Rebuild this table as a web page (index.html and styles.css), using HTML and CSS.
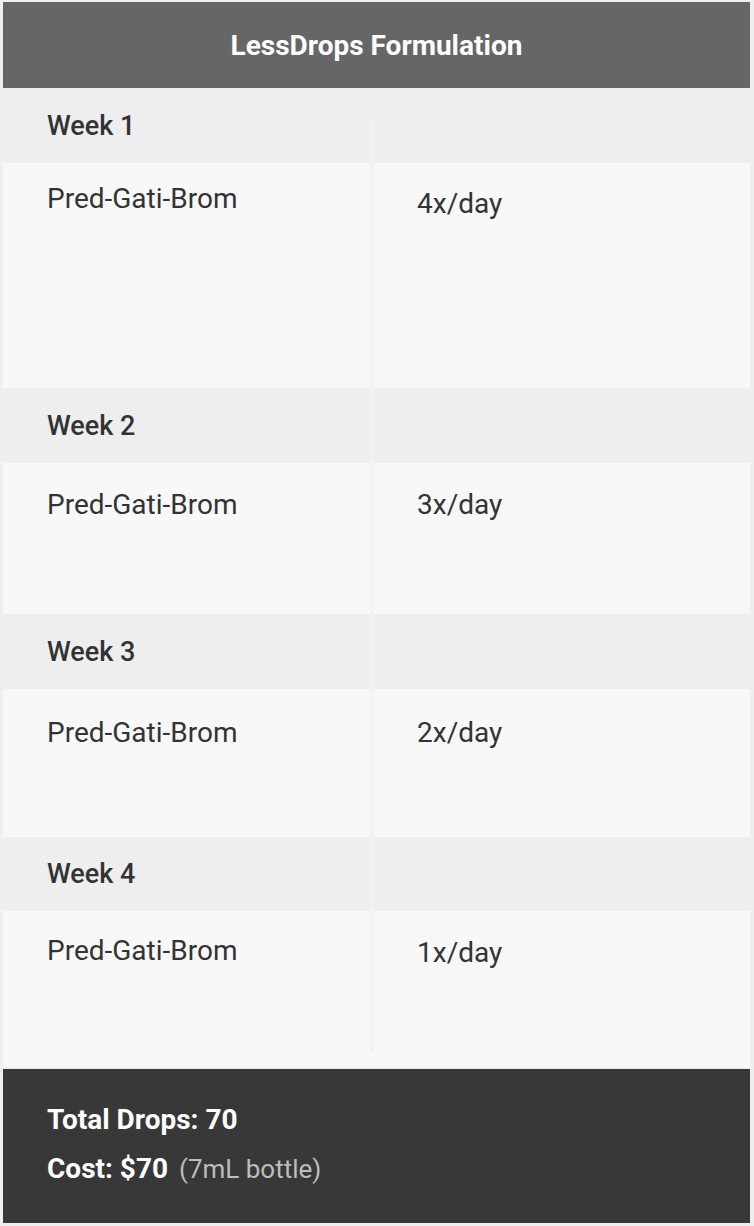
FILE: index.html
```html
<!DOCTYPE html>
<html lang="en">
<head>
<meta charset="utf-8">
<title>LessDrops Formulation</title>
<link rel="stylesheet" href="styles.css">
</head>
<body>
<div class="card">
  <div class="title">LessDrops Formulation</div>
  <div class="schedule">
    <div class="week">Week 1</div>
    <div class="dose dose-1">
      <div class="drug">Pred-Gati-Brom</div>
      <div class="freq freq-low">4x/day</div>
    </div>
    <div class="week">Week 2</div>
    <div class="dose dose-2">
      <div class="drug">Pred-Gati-Brom</div>
      <div class="freq">3x/day</div>
    </div>
    <div class="week">Week 3</div>
    <div class="dose dose-3">
      <div class="drug">Pred-Gati-Brom</div>
      <div class="freq">2x/day</div>
    </div>
    <div class="week week-4">Week 4</div>
    <div class="dose dose-4">
      <div class="drug">Pred-Gati-Brom</div>
      <div class="freq freq-low2">1x/day</div>
    </div>
    <div class="divider"></div>
  </div>
  <div class="totals">
    <div class="total-line">Total Drops: 70</div>
    <div class="total-line">Cost: $70 <span class="note">(7mL bottle)</span></div>
  </div>
</div>
</body>
</html>
```

FILE: styles.css
```css
html, body {
  margin: 0;
  padding: 0;
}
body {
  background: #efefef;
  font-family: Roboto, "Liberation Sans", sans-serif;
  color: #333;
  padding: 2px 4px 2px 3px;
}
.card {
  background: #f8f8f8;
}
.title {
  height: 86px;
  background: #666666;
  color: #fff;
  font-weight: 700;
  font-size: 28px;
  display: flex;
  align-items: center;
  justify-content: center;
}
.schedule {
  position: relative;
}
.week {
  height: 74px;
  background: #eeeeee;
  display: flex;
  align-items: center;
  padding-left: 44px;
  font-size: 27px;
  font-weight: 500;
  color: #333;
  padding-top: 1px;
}
.week-4 {
  height: 74px;
  padding-top: 0;
}
.dose {
  display: grid;
  grid-template-columns: 371px 1fr;
  font-size: 28px;
  line-height: 32px;
  color: #333;
  box-sizing: border-box;
}
.drug {
  padding-left: 44px;
}
.freq {
  padding-left: 43px;
}
.dose-1 { height: 225px; padding-top: 20px; }
.dose-2 { height: 151px; padding-top: 26px; }
.dose-3 { height: 148px; padding-top: 28px; }
.dose-4 { height: 158px; padding-top: 24px; border-bottom: 2px solid #eeeeee; }
.freq-low { padding-top: 5px; }
.freq-low2 { padding-top: 2px; }
.divider {
  position: absolute;
  left: 367px;
  width: 4px;
  top: 32px;
  bottom: 17px;
  background: #f3f3f3;
}
.totals {
  background: #383838;
  color: #fff;
  height: 154px;
  box-sizing: border-box;
  padding: 35px 0 0 44px;
}
.total-line {
  font-size: 28px;
  font-weight: 700;
  line-height: 32px;
  margin-bottom: 17px;
}
.note {
  font-weight: 400;
  font-size: 26px;
  color: #bdbdbd;
  margin-left: 4px;
}
```
